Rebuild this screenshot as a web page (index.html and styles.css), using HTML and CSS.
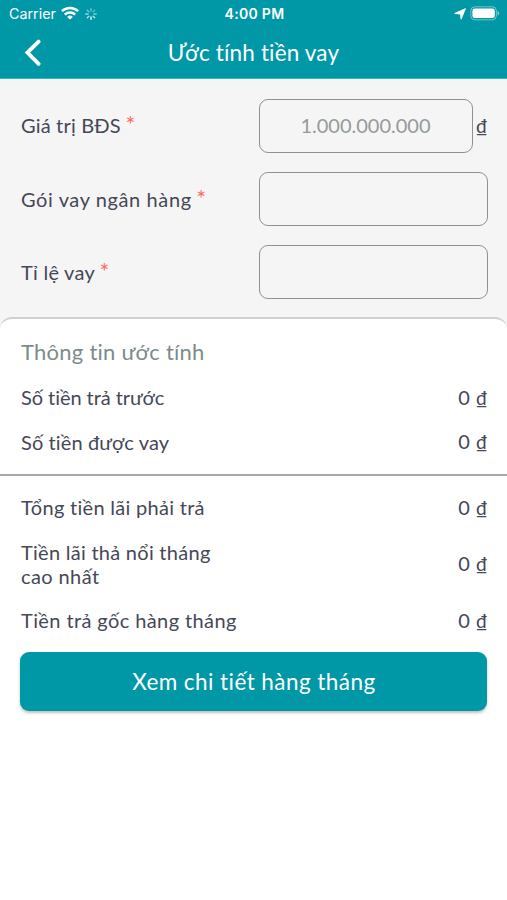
FILE: index.html
```html
<!DOCTYPE html>
<html lang="vi">
<head>
<meta charset="utf-8">
<title>Ước tính tiền vay</title>
<link rel="stylesheet" href="styles.css">
</head>
<body>
<header class="header">
  <div class="status">
    <div class="status-left">
      <span>Carrier</span>
      <svg class="wifi" width="18" height="14" viewBox="0 0 18 14" fill="none" stroke="#fff" stroke-width="2.5"><path d="M.9 5.2a11.7 11.7 0 0 1 16.2 0M3.8 8.6a7.5 7.5 0 0 1 10.4 0"/><path d="M9 13.5 6.1 10.9a4.1 4.1 0 0 1 5.8 0z" fill="#fff" stroke="none"/></svg>
      <svg class="spinner" width="12" height="12" viewBox="0 0 12 12" stroke="#fff" stroke-width="1.3" stroke-linecap="round"><path d="M6 .7v2.4" opacity=".45"/><path d="m9.7 2.3-1.6 1.6" opacity=".4"/><path d="M11.3 6H8.9" opacity=".5"/><path d="M9.7 9.7 8.1 8.1" opacity=".8"/><path d="M6 11.3V8.9"/><path d="m2.3 9.7 1.6-1.6" opacity=".75"/><path d="M.7 6h2.4" opacity=".6"/><path d="m2.3 2.3 1.6 1.6" opacity=".5"/></svg>
    </div>
    <span class="clock">4:00 PM</span>
    <div class="status-right">
      <svg width="12" height="12" viewBox="0 0 12 12"><path d="M11.5.6 7.1 11.3 6.3 6.1.7 5.4z" fill="#fff" stroke="#fff" stroke-width=".8" stroke-linejoin="round"/></svg>
      <svg class="battery" width="30" height="15" viewBox="0 0 30 15"><rect x=".8" y=".8" width="25.6" height="13" rx="4" fill="none" stroke="#fff" stroke-opacity=".45"/><rect x="2.4" y="2.6" width="22.4" height="9.4" rx="2.3" fill="#fff"/><path d="M27.6 5v4.6c2.2-.8 2.2-3.8 0-4.6z" fill="#fff" fill-opacity=".5"/></svg>
    </div>
  </div>
  <nav class="nav">
    <svg class="back" width="18" height="28" viewBox="0 0 18 28" fill="none" stroke="#fff" stroke-width="3.8" stroke-linecap="round"><path d="M14.6 2.6 3.4 13.6l11.2 11.2"/></svg>
    <h1 class="title">Ước tính tiền vay</h1>
  </nav>
</header>
<main>
  <form class="form">
    <div class="field"><label><span class="t-value">Giá trị BĐS</span><b>*</b></label><div class="input">1.000.000.000</div><span class="unit">₫</span></div>
    <div class="field"><label><span class="t-pack">Gói vay ngân hàng</span><b>*</b></label><div class="input"></div></div>
    <div class="field"><label><span class="t-rate">Tỉ lệ vay</span><b>*</b></label><div class="input"></div></div>
  </form>
  <section class="sheet">
    <div class="group upfront">
      <h2><span class="t-info">Thông tin ước tính</span></h2>
      <div class="row"><span class="t-prepay">Số tiền trả trước</span><span class="amount">0 <i>₫</i></span></div>
      <div class="row"><span class="t-loan">Số tiền được vay</span><span class="amount">0 <i>₫</i></span></div>
    </div>
    <div class="group monthly">
      <div class="row"><span class="t-total">Tổng tiền lãi phải trả</span><span class="amount">0 <i>₫</i></span></div>
      <div class="row tall"><span><span class="t-float">Tiền lãi thả nổi tháng</span><br><span class="t-max">cao nhất</span></span><span class="amount">0 <i>₫</i></span></div>
      <div class="row"><span class="t-princ">Tiền trả gốc hàng tháng</span><span class="amount">0 <i>₫</i></span></div>
      <button class="cta" type="button"><span class="t-cta">Xem chi tiết hàng tháng</span></button>
    </div>
  </section>
</main>
</body>
</html>
```
FILE: styles.css
```css
* { box-sizing: border-box; }
body { margin: 0; height: 900px; overflow: hidden; background: #fff; color: #454857; font: 20px/24.5px Lato, "Noto Sans", sans-serif; font-variant-ligatures: none; }
.header { height: 79px; background: #0097a7; color: #fff; border-bottom: 1px solid #38b3bf; }
.status { display: grid; grid-template-columns: 1fr auto 1fr; align-items: center; height: 27px; padding: 0 7px 0 9px; font: 14.3px/27px Inter, sans-serif; }
.status-left, .status-right { display: flex; align-items: center; }
.status-left { gap: 5.5px; }
.status-right { justify-content: flex-end; gap: 4px; }
.wifi { margin-top: -2px; }
.clock { font-weight: 600; font-size: 14px; letter-spacing: .3px; }
.nav { display: grid; grid-template-columns: 60px 1fr 60px; align-items: center; height: 51px; }
.back { margin-left: 24px; }
.title { margin: 0; text-align: center; font-size: 22.5px; font-weight: 400; line-height: 50px; letter-spacing: .16px; }
.form { height: 239px; padding: 19.5px 19.5px 0 21px; background: #f5f5f5; display: flex; flex-direction: column; gap: 19px; }
.field { display: flex; height: 54.2px; align-items: center; }
.field label { width: 237.5px; flex: none; }
.field b { color: #ff6b68; font-weight: 400; font-size: 23px; line-height: 20px; margin-left: 4.5px; }
.input { flex: 1; height: 54px; border: 1px solid #8d9393; border-radius: 9px; text-align: center; color: #959b9b; line-height: 50px; }
.unit { width: 15px; text-align: right; padding-top: 2px; font-size: 19px; }
.sheet { background: #fff; border-top: 2px solid #cfd1d1; border-radius: 12px 12px 0 0; margin-top: -1px; }
main { background: #f5f5f5; }
.group { padding: 0 19.5px 0 21px; }
.upfront { height: 156.5px; padding-top: 19px; border-bottom: 2px solid #a4aaaa; }
h2 { margin: 0 0 19px; font-size: 22px; font-weight: 400; line-height: 28px; color: #7d8b8b; }
.row { display: flex; justify-content: space-between; align-items: center; height: 25px; margin-bottom: 19.5px; }
.amount i { font-style: normal; font-size: 19px; margin-left: 1px; }
.tall { height: 49px; }
.monthly { padding-top: 19.5px; background: #fff; }
.cta { width: 467px; height: 58.5px; margin: -.5px 0 0 -.6px; padding: 0; border: 0; border-radius: 9px; background: #0097a7; color: #fff; font: 22.5px/60px Lato, "Noto Sans", sans-serif; box-shadow: 0 2px 3px rgba(0,0,0,.25); }
.t-value { letter-spacing: .18px; }
.t-pack { letter-spacing: .6px; }
.t-rate { letter-spacing: .25px; }
.t-info { letter-spacing: .25px; }
.t-prepay { letter-spacing: -.06px; }
.t-loan { letter-spacing: .11px; }
.t-total { letter-spacing: .29px; }
.t-float { letter-spacing: .27px; }
.t-max { letter-spacing: .4px; }
.t-princ { letter-spacing: .4px; }
.t-cta { letter-spacing: .44px; }
```
